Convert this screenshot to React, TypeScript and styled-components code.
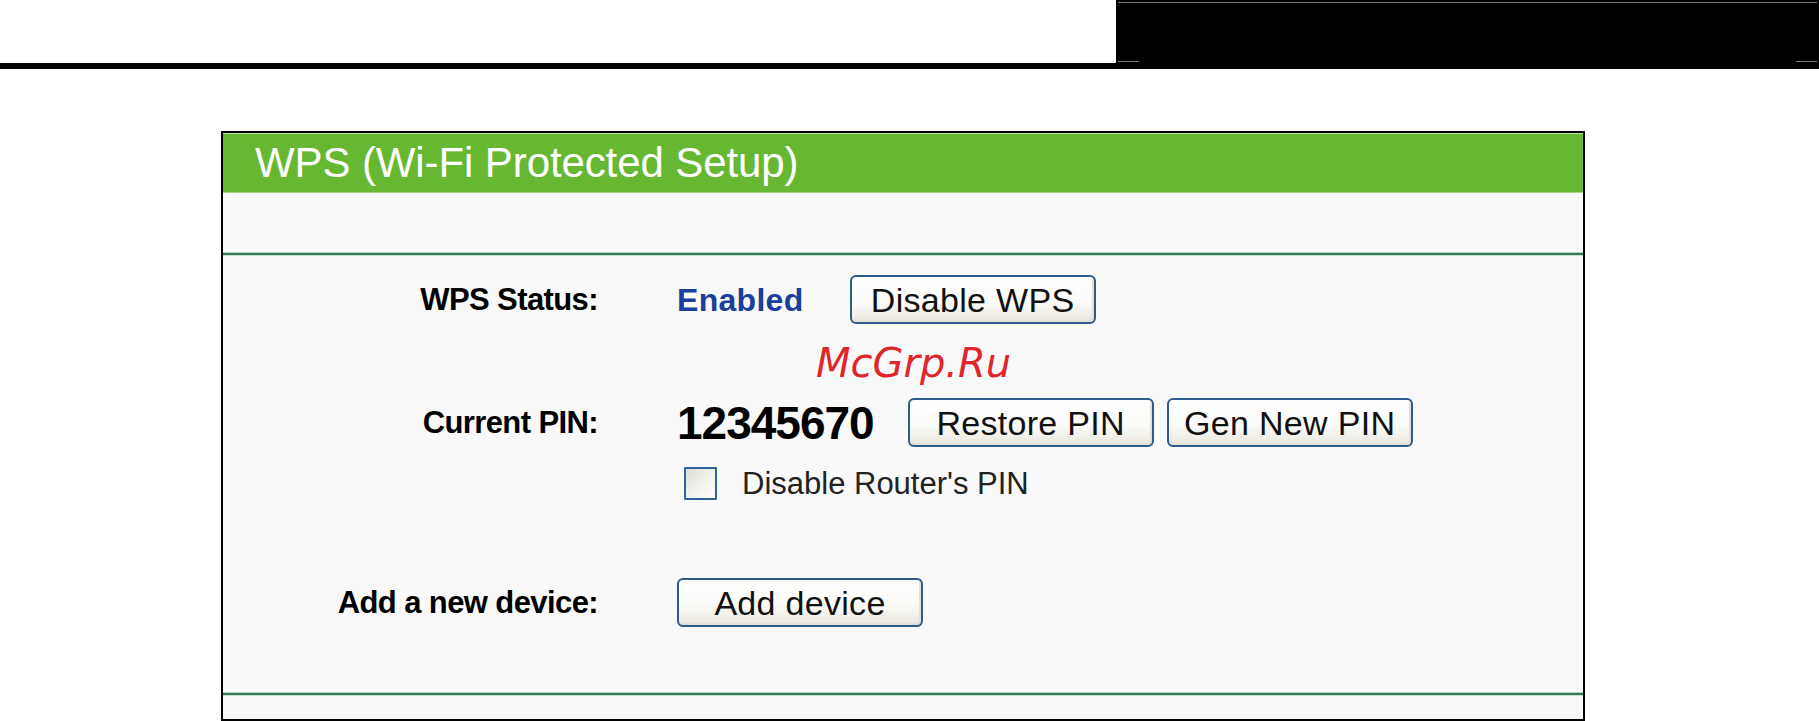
import React from "react";
import styled, { createGlobalStyle } from "styled-components";

const GlobalStyle = createGlobalStyle`
  html, body {
    margin: 0;
    padding: 0;
    background: #ffffff;
    font-family: "Liberation Sans", Arial, sans-serif;
  }
`;

const Page = styled.div`
  width: 1819px;
  height: 721px;
  overflow: hidden;
  background: #ffffff;
`;

const TopBar = styled.div`
  display: flex;
  justify-content: flex-end;
  height: 63px;
`;

const BlackBox = styled.div`
  position: relative;
  width: 703px;
  height: 63px;
  box-sizing: border-box;
  background: #000;
  padding: 2px 2px 0 2px;

  &::before,
  &::after {
    content: "";
    position: absolute;
    bottom: 1px;
    width: 21px;
    height: 1px;
    background: #7a7a7a;
  }
  &::before {
    left: 2px;
  }
  &::after {
    right: 2px;
  }
`;

const TopLine = styled.div`
  height: 1px;
  background: #7a7a7a;
`;

const Rule = styled.div`
  height: 6px;
  background: #000;
`;

const Panel = styled.section`
  position: relative;
  box-sizing: border-box;
  width: 1364px;
  height: 590px;
  margin: 62px 0 0 221px;
  border: 2px solid #000;
  background: #f9f9f9;
  display: flex;
  flex-direction: column;
`;

const Header = styled.div`
  height: 60px;
  background: #66b833;
  box-shadow: inset 0 1px 0 #b9e0a3, inset 0 -1px 0 #a4d389;
  color: #fff;
  font-size: 42px;
  line-height: 60px;
  letter-spacing: -0.1px;
  padding-left: 32px;
  white-space: nowrap;
`;

const Spacer = styled.div`
  height: 60px;
`;

const Divider = styled.div`
  height: 2px;
  background: #347a52;
  box-shadow: 0 -1px 0 #b6d6c2, 0 1px 0 #c9e1d1;
`;

const Body = styled.div`
  height: 438px;
  box-sizing: border-box;
  padding-top: 20px;
`;

const Row = styled.div<{ $top: number }>`
  display: grid;
  grid-template-columns: 375px auto;
  column-gap: 79px;
  align-items: center;
  margin-top: ${(p) => p.$top}px;
  min-height: 49px;
`;

const Label = styled.div`
  text-align: right;
  font-weight: bold;
  font-size: 31px;
  letter-spacing: -0.6px;
  line-height: 1;
  color: #000;
  white-space: nowrap;
`;

const Value = styled.div<{ $gap: number }>`
  display: flex;
  align-items: center;
  gap: ${(p) => p.$gap}px;
`;

const Status = styled.span`
  font-weight: bold;
  font-size: 32px;
  letter-spacing: 0.3px;
  line-height: 1;
  color: #1a3f9b;
  margin-right: 12px;
`;

const Pin = styled.span`
  font-weight: bold;
  font-size: 46px;
  letter-spacing: -1px;
  line-height: 1;
  color: #000;
  margin-right: 21px;
`;

const Button = styled.button`
  box-sizing: border-box;
  width: 246px;
  height: 49px;
  padding: 0;
  border: 2px solid #2e5b8c;
  border-radius: 6px;
  background: linear-gradient(180deg, #ffffff 0%, #fbfbf9 55%, #e8e6dc 100%);
  box-shadow: inset -2px -2px 0 #e3e0d5;
  font-family: "Liberation Sans", Arial, sans-serif;
  font-size: 34px;
  letter-spacing: 0.3px;
  line-height: 1;
  color: #111;
  cursor: pointer;
`;

const CheckWrap = styled.label`
  display: flex;
  align-items: center;
  gap: 25px;
  padding-left: 7px;
  font-size: 31px;
  line-height: 1;
  color: #222;
  white-space: nowrap;
`;

const Box = styled.span`
  box-sizing: border-box;
  width: 33px;
  height: 33px;
  border: 2px solid #2f639a;
  border-radius: 1px;
  background: linear-gradient(135deg, #dcdcd3 0%, #f2f2ee 55%, #ffffff 100%);
`;

const Footer = styled.div`
  flex: 1;
`;

const Watermark = styled.div`
  position: absolute;
  top: 210px;
  left: 593px;
  font-family: "DejaVu Sans", sans-serif;
  font-style: italic;
  font-size: 40px;
  line-height: 40px;
  color: #e0262c;
  white-space: nowrap;
  pointer-events: none;
`;

export default function App() {
  return (
    <>
      <GlobalStyle />
      <Page>
        <TopBar>
          <BlackBox>
            <TopLine />
          </BlackBox>
        </TopBar>
        <Rule />
        <Panel>
          <Header>WPS (Wi-Fi Protected Setup)</Header>
          <Spacer />
          <Divider />
          <Body>
            <Row $top={0}>
              <Label>WPS Status:</Label>
              <Value $gap={34}>
                <Status>Enabled</Status>
                <Button>Disable WPS</Button>
              </Value>
            </Row>
            <Row $top={74}>
              <Label>Current PIN:</Label>
              <Value $gap={13}>
                <Pin>12345670</Pin>
                <Button>Restore PIN</Button>
                <Button>Gen New PIN</Button>
              </Value>
            </Row>
            <Row $top={12}>
              <Label />
              <Value $gap={0}>
                <CheckWrap>
                  <Box />
                  Disable Router's PIN
                </CheckWrap>
              </Value>
            </Row>
            <Row $top={70}>
              <Label>Add a new device:</Label>
              <Value $gap={0}>
                <Button>Add device</Button>
              </Value>
            </Row>
          </Body>
          <Divider />
          <Footer />
          <Watermark>McGrp.Ru</Watermark>
        </Panel>
      </Page>
    </>
  );
}
